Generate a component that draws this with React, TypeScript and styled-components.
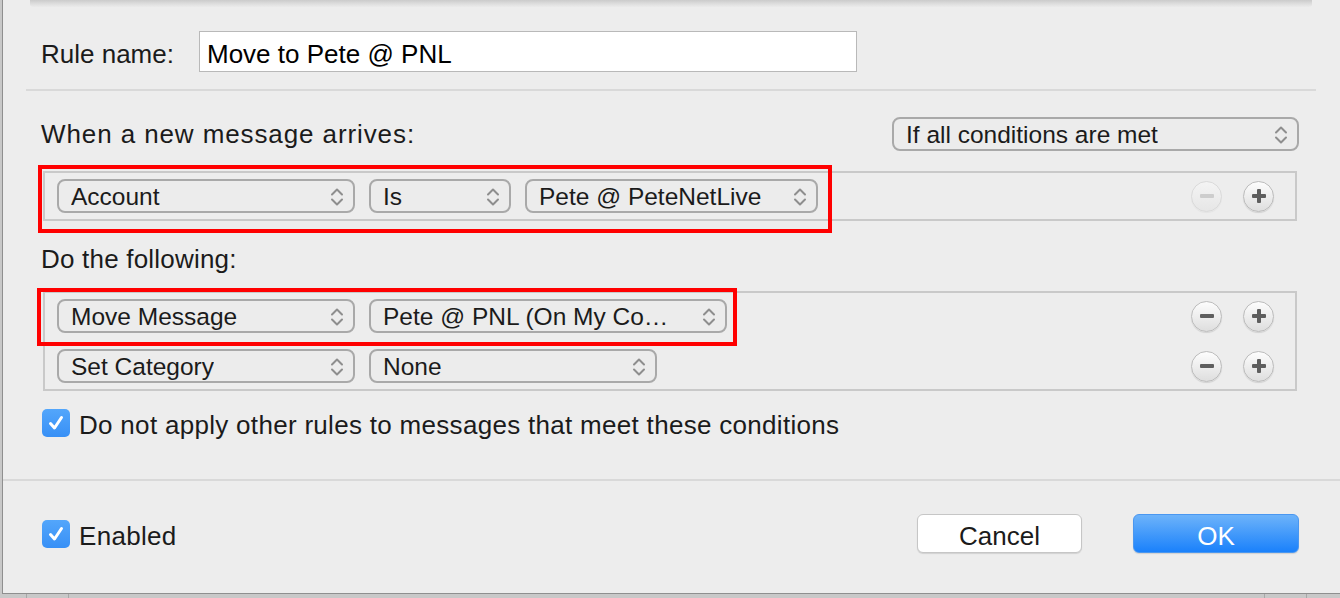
import React from "react";
import styled, { createGlobalStyle } from "styled-components";

const Global = createGlobalStyle`
  html, body { margin: 0; padding: 0; }
  body { font-family: "Liberation Sans", Arial, sans-serif; }
  * { box-sizing: border-box; }
`;

const Page = styled.div`
  width: 1340px;
  height: 598px;
  background: #c8c8c8;
  display: flex;
  flex-direction: column;
  overflow: hidden;
  font-family: "Liberation Sans", Arial, sans-serif;
  font-size: 26px;
  letter-spacing: 0.3px;
  color: #1b1b1b;
`;

const Dialog = styled.div`
  height: 594px;
  margin-left: 2px;
  border-left: 1px solid #8f8f8f;
  border-bottom: 1px solid #8f8f8f;
  background: #ededed;
  display: flex;
  flex-direction: column;
  flex-shrink: 0;
`;

const TopShadow = styled.div`
  height: 7px;
  margin: 0 28px 0 27px;
  background: linear-gradient(#cbcbcb, #dcdcdc 50%, #ebebeb);
  border-radius: 0 0 3px 3px;
`;

const Section = styled.div`
  padding: 0 41px 0 38px;
  display: flex;
  flex-direction: column;
`;

const RuleRow = styled.div`
  margin-top: 24px;
  display: flex;
  align-items: center;
`;

const Label = styled.span`
  width: 158px;
  flex-shrink: 0;
  padding-top: 6px;
  letter-spacing: 0;
`;

const TextField = styled.div`
  width: 658px;
  height: 41px;
  background: #fff;
  border: 1px solid #b9b9b9;
  display: flex;
  align-items: center;
  padding: 6px 0 0 7px;
  color: #000;
  letter-spacing: 0;
`;

const Separator = styled.div<{ $inset?: boolean }>`
  height: 2px;
  background: #d9d9d9;
  margin: ${(p) => (p.$inset ? "17px 24px 0 23px" : "42px 0 0 0")};
`;

const HeaderRow = styled.div`
  margin-top: 26px;
  height: 34px;
  display: flex;
  align-items: center;
  justify-content: space-between;
`;

const HeaderText = styled.span`
  letter-spacing: 0.9px;
`;

const PopupBox = styled.div<{ $w: number }>`
  width: ${(p) => p.$w}px;
  height: 34px;
  flex-shrink: 0;
  border: 2px solid #a9a9a9;
  border-radius: 8px;
  background: #ececec;
  display: flex;
  align-items: center;
  justify-content: space-between;
  padding: 1px 9px 0 12px;
  white-space: nowrap;
  font-size: 24.5px;
  letter-spacing: 0;
`;

const PopupText = styled.span`
  overflow: hidden;
  text-overflow: ellipsis;
`;

const GroupBox = styled.div<{ $top: number }>`
  position: relative;
  margin: ${(p) => p.$top}px 2px 0;
  border: 2px solid #c9c9c9;
  padding: 6px 21px 6px 12px;
  display: flex;
  flex-direction: column;
  gap: 16px;
`;

const RuleLine = styled.div`
  display: flex;
  align-items: center;
  height: 34px;
`;

const Pickers = styled.div`
  display: flex;
  align-items: center;
  gap: 14px;
  flex: 1;
`;

const RoundButtons = styled.div`
  display: flex;
  gap: 21px;
`;

const RoundButton = styled.div<{ $disabled?: boolean }>`
  width: 31px;
  height: 31px;
  border-radius: 50%;
  border: 1px solid ${(p) => (p.$disabled ? "#dadada" : "#bcbcbc")};
  background: ${(p) =>
    p.$disabled
      ? "linear-gradient(#f4f4f4, #e6e6e6)"
      : "linear-gradient(#fdfdfd, #dedede)"};
  box-shadow: 0 1px 1px rgba(0, 0, 0, ${(p) => (p.$disabled ? 0.04 : 0.12)});
  display: flex;
  align-items: center;
  justify-content: center;
`;

const Highlight = styled.div<{ $l: number; $t: number; $w: number; $h: number }>`
  position: absolute;
  left: ${(p) => p.$l}px;
  top: ${(p) => p.$t}px;
  width: ${(p) => p.$w}px;
  height: ${(p) => p.$h}px;
  border: 4px solid #ff0000;
  pointer-events: none;
`;

const SectionLabel = styled.div`
  margin-top: 22px;
  line-height: 30px;
  padding-top: 1px;
  letter-spacing: 0.2px;
`;

const CheckRow = styled.label<{ $top: number }>`
  margin-top: ${(p) => p.$top}px;
  display: flex;
  align-items: center;
  gap: 9px;
  height: 28px;
`;

const CheckText = styled.span`
  padding-top: 5px;
`;

const CheckBox = styled.span`
  width: 28px;
  height: 28px;
  margin-left: 1px;
  border-radius: 5px;
  background: linear-gradient(#53a6fb, #3890f6);
  display: flex;
  align-items: center;
  justify-content: center;
  flex-shrink: 0;
`;

const Footer = styled.div`
  margin-top: 33px;
  height: 39px;
  padding: 0 41px 0 38px;
  display: flex;
  align-items: center;
`;

const Spacer = styled.div`
  flex: 1;
`;

const PushButton = styled.div<{ $primary?: boolean; $w: number }>`
  width: ${(p) => p.$w}px;
  height: 39px;
  border-radius: 6px;
  display: flex;
  align-items: center;
  justify-content: center;
  padding-top: 5px;
  letter-spacing: 0;
  margin-left: ${(p) => (p.$primary ? "51px" : "0")};
  color: ${(p) => (p.$primary ? "#fff" : "#1b1b1b")};
  background: ${(p) =>
    p.$primary ? "linear-gradient(#6db3fa, #1a81fb)" : "#ffffff"};
  border: 1px solid ${(p) => (p.$primary ? "#4a97f0" : "#c6c6c6")};
  box-shadow: 0 1px 1px rgba(0, 0, 0, 0.12);
`;

const BottomStrip = styled.div`
  flex: 1;
  display: flex;
`;

const StripCell = styled.div<{ $w: number }>`
  width: ${(p) => p.$w}px;
  border-right: 1px solid #a8a8a8;
  flex-shrink: 0;
`;

const Chevrons = () => (
  <svg width="14" height="20" viewBox="0 0 14 20">
    <path
      d="M2 7.5 L7 2.5 L12 7.5 M2 12.5 L7 17.5 L12 12.5"
      fill="none"
      stroke="#8e8e8e"
      strokeWidth="2"
      strokeLinecap="round"
      strokeLinejoin="round"
    />
  </svg>
);

const Popup = ({ w, text }: { w: number; text: string }) => (
  <PopupBox $w={w}>
    <PopupText>{text}</PopupText>
    <Chevrons />
  </PopupBox>
);

const Minus = ({ disabled }: { disabled?: boolean }) => (
  <RoundButton $disabled={disabled}>
    <svg width="16" height="16" viewBox="0 0 16 16">
      <rect x="1" y="6" width="14" height="4" rx="1" fill={disabled ? "#cdcdcd" : "#5e5e5e"} />
    </svg>
  </RoundButton>
);

const Plus = () => (
  <RoundButton>
    <svg width="16" height="16" viewBox="0 0 16 16">
      <rect x="1" y="6" width="14" height="4" rx="1" fill="#5e5e5e" />
      <rect x="6" y="1" width="4" height="14" rx="1" fill="#5e5e5e" />
    </svg>
  </RoundButton>
);

const Tick = () => (
  <svg width="18" height="18" viewBox="0 0 18 18">
    <path
      d="M3.5 9.5 L7.5 14 L14.5 3.5"
      fill="none"
      stroke="#fff"
      strokeWidth="3"
      strokeLinecap="round"
      strokeLinejoin="round"
    />
  </svg>
);

export default function App() {
  return (
    <Page>
      <Global />
      <Dialog>
        <TopShadow />
        <Section>
          <RuleRow>
            <Label>Rule name:</Label>
            <TextField>Move to Pete @ PNL</TextField>
          </RuleRow>
        </Section>
        <Separator $inset />
        <Section>
          <HeaderRow>
            <HeaderText>When a new message arrives:</HeaderText>
            <Popup w={407} text="If all conditions are met" />
          </HeaderRow>
          <GroupBox $top={20}>
            <RuleLine>
              <Pickers>
                <Popup w={298} text="Account" />
                <Popup w={142} text="Is" />
                <Popup w={293} text="Pete @ PeteNetLive" />
              </Pickers>
              <RoundButtons>
                <Minus disabled />
                <Plus />
              </RoundButtons>
            </RuleLine>
            <Highlight $l={-7} $t={-8} $w={794} $h={68} />
          </GroupBox>
          <SectionLabel>Do the following:</SectionLabel>
          <GroupBox $top={17}>
            <RuleLine>
              <Pickers>
                <Popup w={298} text="Move Message" />
                <Popup w={358} text="Pete @ PNL (On My Co…" />
              </Pickers>
              <RoundButtons>
                <Minus />
                <Plus />
              </RoundButtons>
            </RuleLine>
            <RuleLine>
              <Pickers>
                <Popup w={298} text="Set Category" />
                <Popup w={288} text="None" />
              </Pickers>
              <RoundButtons>
                <Minus />
                <Plus />
              </RoundButtons>
            </RuleLine>
            <Highlight $l={-8} $t={-5} $w={700} $h={58} />
          </GroupBox>
          <CheckRow $top={18}>
            <CheckBox>
              <Tick />
            </CheckBox>
            <CheckText>Do not apply other rules to messages that meet these conditions</CheckText>
          </CheckRow>
        </Section>
        <Separator />
        <Footer>
          <CheckRow $top={0}>
            <CheckBox>
              <Tick />
            </CheckBox>
            <CheckText>Enabled</CheckText>
          </CheckRow>
          <Spacer />
          <PushButton $w={165}>Cancel</PushButton>
          <PushButton $w={166} $primary>
            OK
          </PushButton>
        </Footer>
      </Dialog>
      <BottomStrip>
        <StripCell $w={27} />
        <StripCell $w={42} />
        <StripCell $w={1196} />
        <StripCell $w={42} />
      </BottomStrip>
    </Page>
  );
}
